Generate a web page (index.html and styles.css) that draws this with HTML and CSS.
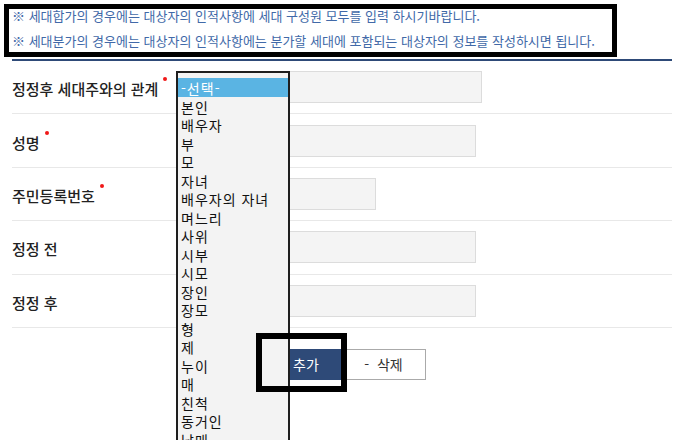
FILE: index.html
```html
<!DOCTYPE html>
<html lang="ko">
<head>
    <meta charset="UTF-8">
    <meta name="viewport" content="width=device-width, initial-scale=1.0">
    <title>세대주 관계 정정</title>
    <link rel="stylesheet" href="styles.css">
</head>
<body>
    <div class="notice">
        <p>※ 세대합가의 경우에는 대상자의 인적사항에 세대 구성원 모두를 입력 하시기바랍니다.</p>
        <p>※ 세대분가의 경우에는 대상자의 인적사항에는 분가할 세대에 포함되는 대상자의 정보를 작성하시면 됩니다.</p>
    </div>

    <div class="form-wrap">
        <div class="form-row">
            <div class="form-label">정정후 세대주와의 관계<span class="req"></span></div>
            <input type="text" class="form-input w306">
        </div>
        <div class="form-row">
            <div class="form-label">성명<span class="req"></span></div>
            <input type="text" class="form-input w300">
        </div>
        <div class="form-row">
            <div class="form-label">주민등록번호<span class="req"></span></div>
            <input type="text" class="form-input w200">
        </div>
        <div class="form-row">
            <div class="form-label">정정 전</div>
            <input type="text" class="form-input w300">
        </div>
        <div class="form-row">
            <div class="form-label">정정 후</div>
            <input type="text" class="form-input w300">
        </div>

        <div class="form-actions">
            <button type="button" class="btn-add">추가</button>
            <button type="button" class="btn-del">-  삭제</button>
        </div>
    </div>

    <!-- opened select list -->
    <div class="select-list">
        <div class="option selected">-선택-</div>
        <div class="option">본인</div>
        <div class="option">배우자</div>
        <div class="option">부</div>
        <div class="option">모</div>
        <div class="option">자녀</div>
        <div class="option">배우자의 자녀</div>
        <div class="option">며느리</div>
        <div class="option">사위</div>
        <div class="option">시부</div>
        <div class="option">시모</div>
        <div class="option">장인</div>
        <div class="option">장모</div>
        <div class="option">형</div>
        <div class="option">제</div>
        <div class="option">누이</div>
        <div class="option">매</div>
        <div class="option">친척</div>
        <div class="option">동거인</div>
        <div class="option">남매</div>
    </div>

    <div class="mark"></div>
</body>
</html>
```

FILE: styles.css
```css
html {
    overflow: hidden;
}
body {
    font-family: 'Noto Sans CJK KR', 'Noto Sans', sans-serif;
    color: #333;
    margin: 0;
    padding: 0;
    background-color: #fff;
}
.notice {
    box-sizing: border-box;
    width: 613px;
    height: 53px;
    margin: 4px 0 0 4px;
    padding: 0 3px;
    border: 5px solid #000;
}
.notice p {
    margin: 0;
    font-size: 13px;
    line-height: 14px;
    color: #4169a8;
    white-space: nowrap;
}
.notice p + p {
    margin-top: 11px;
}
.form-wrap {
    width: 660px;
    margin: 2px 0 0 12px;
    border-top: 2px solid #2e4a78;
}
.form-row {
    display: flex;
    align-items: center;
    box-sizing: border-box;
    height: 53.4px;
    border-bottom: 1px solid #e8e8e8;
}
.form-label {
    width: 164px;
    font-size: 15px;
    font-weight: 500;
    color: #222;
    padding-top: 3px;
    white-space: nowrap;
}
.req {
    display: inline-block;
    width: 4px;
    height: 4px;
    margin-left: 5px;
    border-radius: 50%;
    background-color: #f01818;
    position: relative;
    top: -14px;
}
.form-input {
    box-sizing: border-box;
    height: 32px;
    margin: 0;
    border: 1px solid #dcdcdc;
    background-color: #f4f4f4;
    padding: 0 8px;
    font-size: 14px;
}
.w306 {
    width: 306px;
}
.w300 {
    width: 300px;
}
.w200 {
    width: 200px;
}
.form-actions {
    display: flex;
    padding: 21px 0 0 259px;
}
.btn-add,
.btn-del {
    box-sizing: border-box;
    height: 31px;
    margin: 0;
    font-family: inherit;
    font-size: 14px;
    cursor: pointer;
}
.btn-add {
    width: 70px;
    border: none;
    background-color: #2e4a78;
    color: #fff;
}
.btn-del {
    width: 85px;
    border: 1px solid #aaa;
    background-color: #fff;
    color: #333;
    white-space: pre;
}
.select-list {
    position: absolute;
    left: 176px;
    top: 71px;
    box-sizing: border-box;
    width: 114px;
    height: 390px;
    padding-top: 5px;
    border: 2px solid #1e1e1e;
    background-color: #f3f3f3;
}
.option {
    height: 18.5px;
    line-height: 20px;
    padding-left: 3px;
    font-size: 14px;
    letter-spacing: 1px;
    color: #111;
    white-space: nowrap;
}
.option.selected {
    background-color: #5ab4e3;
    color: #fff;
}
.mark {
    position: absolute;
    left: 256px;
    top: 333px;
    box-sizing: border-box;
    width: 91px;
    height: 59px;
    border: 6px solid #000;
}
```
